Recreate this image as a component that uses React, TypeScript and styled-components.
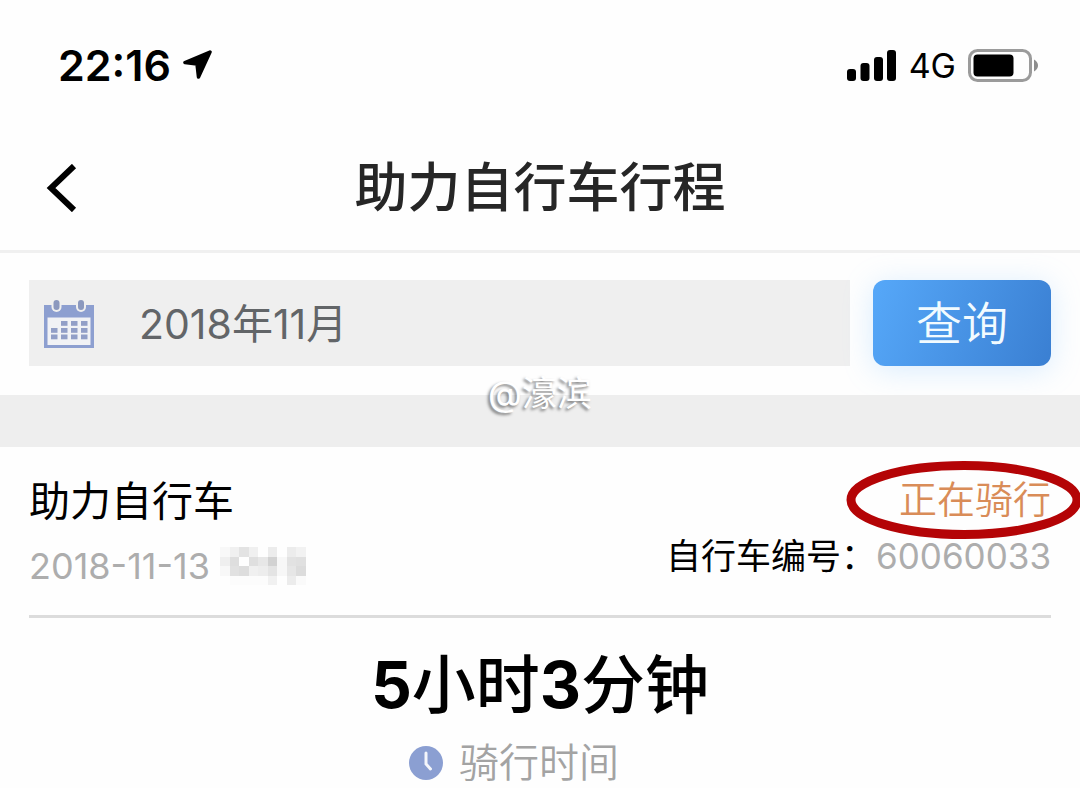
import React from "react";
import styled, { createGlobalStyle } from "styled-components";

const GlobalStyle = createGlobalStyle`
  *, *::before, *::after { box-sizing: border-box; }
  body {
    margin: 0;
    background: #fefefe;
    color: #000;
    font-family: Inter, "Noto Sans CJK SC", sans-serif;
  }
  h1, h2, p, dl, dt, dd { margin: 0; font-weight: inherit; }
`;

const Page = styled.div`
  width: 100%;
  overflow: hidden;
`;

const StatusBar = styled.div`
  display: flex;
  align-items: center;
  justify-content: space-between;
  height: 130px;
  padding: 0 41px 0 58px;
`;

const StatusGroup = styled.div`
  display: flex;
  align-items: center;
  gap: 12px;
`;

const Clock = styled.time`
  font-size: 43px;
  line-height: 52px;
  font-weight: 600;
`;

const Network = styled.span`
  padding-top: 2px;
  font-size: 34px;
  line-height: 52px;
`;

const Header = styled.header`
  display: grid;
  grid-template-columns: 80px 1fr 80px;
  align-items: center;
  height: 123px;
  padding: 0 20px 4px;
  border-bottom: 3px solid #f0f0f0;
`;

const BackButton = styled.button`
  display: flex;
  align-items: center;
  height: 80px;
  padding: 0 0 0 26px;
  border: 0;
  background: none;
`;

const Title = styled.h1`
  color: #262626;
  font-size: 53px;
  line-height: 80px;
  font-weight: 500;
  text-align: center;
`;

const FilterBar = styled.form`
  display: flex;
  gap: 23px;
  padding: 27px 29px 29px;
`;

const MonthField = styled.label`
  display: flex;
  flex: 1;
  align-items: center;
  gap: 44px;
  min-width: 0;
  height: 86px;
  padding: 2px 14px 0;
  background: #efefef;
`;

const MonthInput = styled.input`
  flex: 1;
  min-width: 0;
  padding: 0;
  border: 0;
  outline: 0;
  background: none;
  color: #626568;
  font-family: inherit;
  font-size: 41px;
  line-height: 60px;
`;

const QueryButton = styled.button`
  width: 178px;
  height: 86px;
  padding: 0;
  border: 0;
  border-radius: 12px;
  background: linear-gradient(110deg, #56a8f9, #3a7fd2);
  box-shadow: 0 4px 30px rgba(120, 190, 255, 0.28);
  color: #f2fbff;
  font-family: inherit;
  font-size: 46px;
  line-height: 80px;
  font-weight: 350;
`;

const Band = styled.div`
  position: relative;
  height: 52px;
  background: #eeeeee;
`;

const Watermark = styled.span`
  position: absolute;
  bottom: 28px;
  left: 50%;
  transform: translateX(-50%);
  color: #fff;
  font-size: 35px;
  line-height: 52px;
  text-shadow: -2px 2px 3px rgba(0, 0, 0, 0.5);
`;

const Trip = styled.article`
  padding: 0 29px;
`;

const TripSummary = styled.div`
  display: flex;
  justify-content: space-between;
  height: 171px;
  padding-top: 22px;
  border-bottom: 3px solid #dcdcdc;
`;

const Column = styled.div<{ $end?: boolean }>`
  display: flex;
  flex-direction: column;
  align-items: ${({ $end }) => ($end ? "flex-end" : "flex-start")};
`;

const TripName = styled.h2`
  font-size: 41px;
  line-height: 64px;
`;

const TripDate = styled.div`
  display: flex;
  align-items: center;
  gap: 10px;
  color: #adadad;
  font-size: 36px;
  line-height: 66px;
`;

const TripStatus = styled.p`
  position: relative;
  color: #d98c58;
  font-size: 38px;
  line-height: 60px;
  font-weight: 350;
`;

const Marker = styled.svg`
  position: absolute;
  top: 50%;
  right: -31px;
  transform: translateY(-50%);
`;

const BikeNumber = styled.dl`
  display: flex;
  font-size: 35px;
  line-height: 54px;
`;

const BikeValue = styled.dd`
  color: #adadad;
`;

const Duration = styled.section`
  display: flex;
  flex-direction: column;
  align-items: center;
  padding-top: 18px;
`;

const DurationValue = styled.p`
  font-size: 64px;
  line-height: 98px;
  font-weight: 500;

  b { font-weight: 700; }
`;

const DurationLabel = styled.p`
  display: flex;
  align-items: center;
  gap: 16px;
  padding: 2px 52px 0 0;
  color: #a3a3a3;
  font-size: 40px;
  line-height: 53px;
  font-weight: 350;
`;

const LocationIcon = () => (
  <svg width="30" height="30" viewBox="0 0 30 30" aria-hidden="true">
    <path d="M27 2 2 12.500 14 14 15.500 27Z" fill="#000" stroke="#000" strokeWidth="3.500" strokeLinejoin="round" />
  </svg>
);

const SignalIcon = () => (
  <svg width="50" height="31" viewBox="0 0 50 31" aria-hidden="true">
    <rect x="0" y="19" width="9" height="12" rx="3" />
    <rect x="13.500" y="13" width="9" height="18" rx="3" />
    <rect x="27" y="7" width="9" height="24" rx="3" />
    <rect x="40" y="0" width="9" height="31" rx="3" />
  </svg>
);

const BatteryIcon = () => (
  <svg width="71" height="33" viewBox="0 0 71 33" aria-hidden="true">
    <rect x="1.5" y="1.5" width="61" height="30" rx="8" fill="none" stroke="#9b9b9b" strokeWidth="3" />
    <rect x="5.500" y="5.500" width="40" height="22" rx="4" />
    <path d="M66 10.5Q70 13 70 16.500T66 22.500Z" fill="#8d8d8d" />
  </svg>
);

const BackIcon = () => (
  <svg width="32" height="48" viewBox="0 0 32 48" aria-hidden="true">
    <path d="M28 2 5 24 28 46" fill="none" stroke="#000" strokeWidth="6" />
  </svg>
);

const CalendarIcon = () => (
  <svg width="52" height="50" viewBox="0 0 52 50" aria-hidden="true">
    <path d="M1 6H51V49H1Z" fill="#8d9fd0" />
    <path d="M4.500 18.500H47.500V46H4.500Z" fill="#f1f2f5" />
    {[13.5, 38].map((x) => (
      <g key={x}>
        <rect x={x - 5} y="-1" width="10" height="14" rx="5" fill="#efefef" />
        <rect x={x - 3} y="1" width="6" height="10" rx="3" fill="#8b98be" />
      </g>
    ))}
    {[22, 29, 35.500].map((y, row) =>
      [8, 18, 28, 38]
        .slice(row === 0 ? 1 : 0)
        .map((x) => <rect key={`${x}-${y}`} x={x} y={y} width="6.500" height="4.800" fill="#929fc7" />)
    )}
  </svg>
);

const ClockIcon = () => (
  <svg width="34" height="34" viewBox="0 0 34 34" aria-hidden="true">
    <circle cx="17" cy="17" r="17" fill="#8b9fd2" />
    <path d="M17 7V18L21.500 23" fill="none" stroke="#f4f6fb" strokeWidth="3" strokeLinecap="round" />
  </svg>
);

/* Grey level of every block of the pixelated time, row by row. */
const mosaic = [
  [248, 240, 227, 240, 254, 236, 254, 236, 242],
  [239, 222, 254, 223, 231, 210, 247, 226, 224],
  [248, 225, 221, 240, 237, 228, 247, 230, 220],
  [254, 252, 252, 252, 252, 241, 254, 236, 250],
];

const HiddenTime = () => (
  <svg width="86" height="38" viewBox="0 0 90 40" preserveAspectRatio="none" shapeRendering="crispEdges" aria-hidden="true">
    {mosaic.flatMap((levels, row) =>
      levels.map((level, col) => (
        <rect
          key={`${row}-${col}`}
          x={col * 10}
          y={row * 10}
          width="10"
          height="10"
          fill={`rgb(${level}, ${level}, ${level})`}
        />
      ))
    )}
  </svg>
);

export default function App() {
  return (
    <Page lang="zh-CN">
      <GlobalStyle />
      <StatusBar>
        <StatusGroup>
          <Clock>22:16</Clock>
          <LocationIcon />
        </StatusGroup>
        <StatusGroup>
          <SignalIcon />
          <Network>4G</Network>
          <BatteryIcon />
        </StatusGroup>
      </StatusBar>
      <Header>
        <BackButton type="button" aria-label="返回">
          <BackIcon />
        </BackButton>
        <Title>助力自行车行程</Title>
      </Header>
      <main>
        <FilterBar onSubmit={(event) => event.preventDefault()}>
          <MonthField>
            <CalendarIcon />
            <MonthInput type="text" aria-label="月份" defaultValue="2018年11月" />
          </MonthField>
          <QueryButton type="submit">查询</QueryButton>
        </FilterBar>
        <Band>
          <Watermark>@濠滨</Watermark>
        </Band>
        <Trip>
          <TripSummary>
            <Column>
              <TripName>助力自行车</TripName>
              <TripDate>
                <time>2018-11-13</time>
                <HiddenTime />
              </TripDate>
            </Column>
            <Column $end>
              <TripStatus>
                正在骑行
                <Marker width="236" height="80" viewBox="0 0 236 80" aria-hidden="true">
                  <ellipse cx="118" cy="41" rx="113" ry="34.500" fill="none" stroke="#b40406" strokeWidth="9" />
                </Marker>
              </TripStatus>
              <BikeNumber>
                <dt>自行车编号：</dt>
                <BikeValue>60060033</BikeValue>
              </BikeNumber>
            </Column>
          </TripSummary>
          <Duration>
            <DurationValue>
              <b>5</b>小时<b>3</b>分钟
            </DurationValue>
            <DurationLabel>
              <ClockIcon />
              骑行时间
            </DurationLabel>
          </Duration>
        </Trip>
      </main>
    </Page>
  );
}
